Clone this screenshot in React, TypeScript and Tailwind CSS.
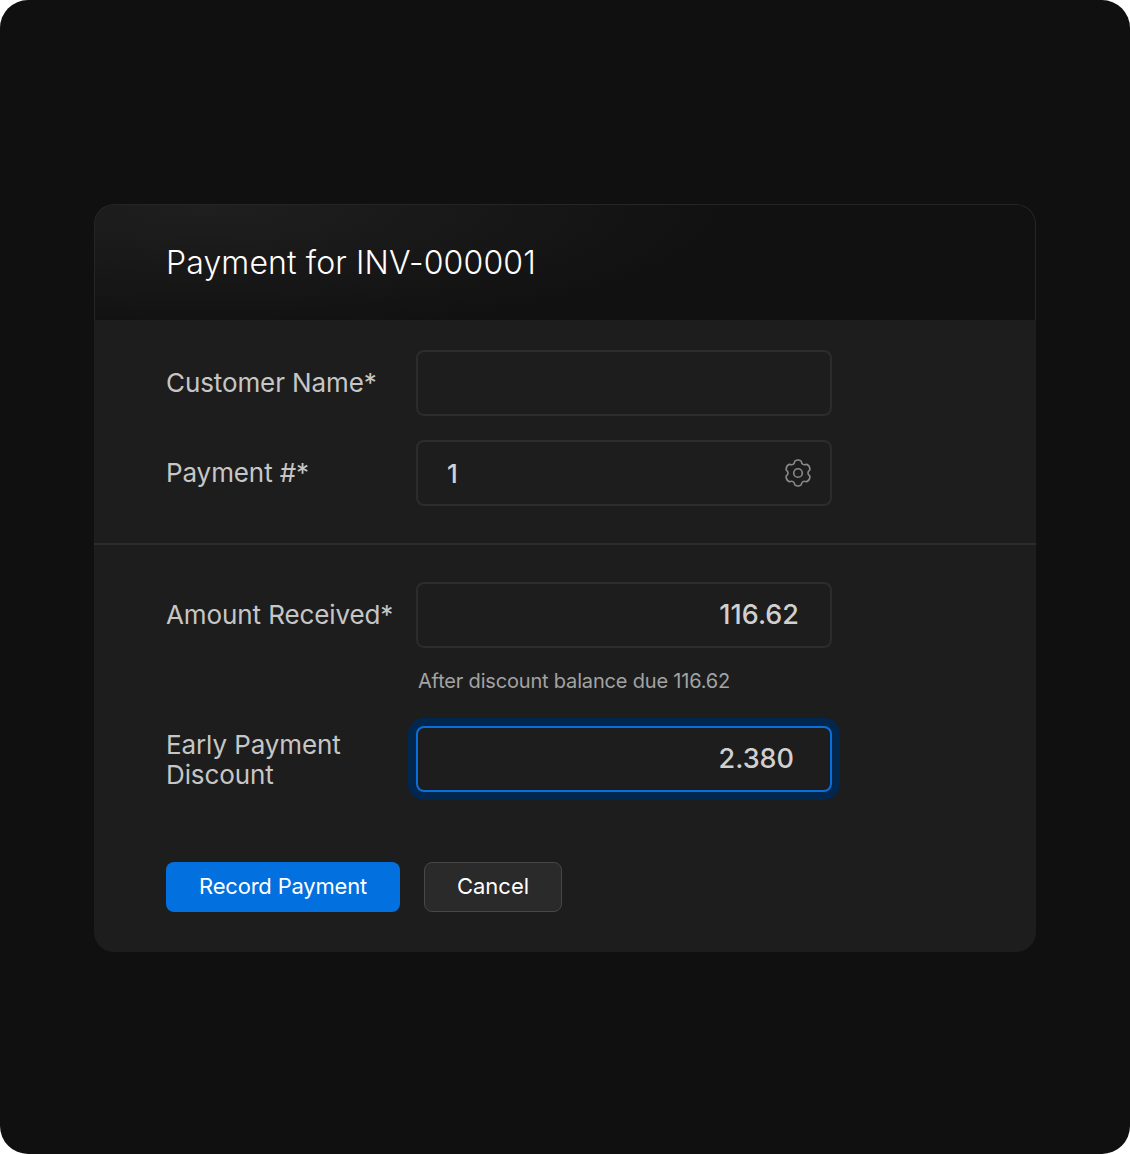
import { ReactNode } from 'react'

function Label({ children }: { children: ReactNode }) {
  return <div className="w-[250px] shrink-0 text-[26px] leading-[30px] tracking-[-0.1px] text-[#c6c6c6]">{children}</div>
}

// six rounded lobes, one pointing straight up
function gearPath() {
  const pt = (deg: number, r: number) => {
    const a = ((deg - 90) * Math.PI) / 180
    return `${(14 + r * Math.cos(a)).toFixed(2)} ${(14 + r * Math.sin(a)).toFixed(2)}`
  }
  let d = `M${pt(-15, 12.3)}`
  for (let i = 0; i < 6; i++) {
    const c = i * 60
    d += ` Q${pt(c, 14)} ${pt(c + 15, 12.3)}`
    d += ` Q${pt(c + 30, 8)} ${pt(c + 45, 12.3)}`
  }
  return d + 'Z'
}

function GearIcon() {
  return (
    <svg width="28" height="28" viewBox="0 0 28 28" fill="none" stroke="#8a8a8a" strokeWidth="1.6" strokeLinejoin="round">
      <path d={gearPath()} />
      <circle cx="14" cy="14" r="4.300" />
    </svg>
  )
}

export default function App() {
  return (
    <div className="h-[1154px] bg-white font-['Inter','Noto_Sans',sans-serif]">
      <div className="h-full rounded-[28px] bg-[#101010] px-[94px] pt-[204px]">
        <div className="h-[748px] overflow-hidden rounded-[20px] bg-[#1d1d1d]">
          <div className="flex h-[116px] items-center rounded-t-[20px] border border-b-0 border-[#252525] bg-[radial-gradient(ellipse_520px_130px_at_12%_0%,#1f1f1f,#111111)] pl-[71px]">
            <h1 className="text-[32px] font-light tracking-[0.13px] text-white">Payment for INV-000001</h1>
          </div>

          <div className="flex flex-col gap-6 border-b-2 border-[#2c2c2c] px-[72px] pt-[30px] pb-[37px]">
            <div className="flex items-center">
              <Label>Customer Name*</Label>
              <div className="h-[66px] w-[416px] rounded-lg border-2 border-[#2c2c2c]" />
            </div>
            <div className="flex items-center">
              <Label>Payment #*</Label>
              <div className="flex h-[66px] w-[416px] items-center justify-between rounded-lg border-2 border-[#2c2c2c] pr-[18px] pl-[29px] text-[26px] font-medium text-[#d0d0d0]">
                <span>1</span>
                <GearIcon />
              </div>
            </div>
          </div>

          <div className="px-[72px] pt-[37px]">
            <div className="flex items-center">
              <Label>Amount Received*</Label>
              <div className="flex h-[66px] w-[416px] items-center justify-end rounded-lg border-2 border-[#2c2c2c] pr-[31px] text-[27px] font-medium text-[#d0d0d0]">
                116.62
              </div>
            </div>
            <div className="mt-[20px] pl-[252px] text-[20px] leading-[26px] tracking-[-0.18px] text-[#a3a3a3]">After discount balance due 116.62</div>
            <div className="mt-[32px] flex items-center">
              <div className="pt-[2px]">
                <Label>
                  Early Payment
                  <br />
                  Discount
                </Label>
              </div>
              <div className="flex h-[66px] w-[416px] items-center justify-end rounded-lg border-2 border-[#0a6fdc] pr-[36px] text-[27px] font-medium text-[#d0d0d0] shadow-[0_0_0_8px_#02274f]">
                2.380
              </div>
            </div>
            <div className="mt-[70px] flex gap-6">
              <button className="h-[50px] w-[234px] rounded-lg bg-[#0270de] pb-[2px] text-[22px] tracking-[-0.2px] text-white">Record Payment</button>
              <button className="h-[50px] w-[138px] rounded-lg border border-[#474747] bg-[#2a2a2a] pb-[2px] text-[22px] text-white">Cancel</button>
            </div>
          </div>
        </div>
      </div>
    </div>
  )
}
